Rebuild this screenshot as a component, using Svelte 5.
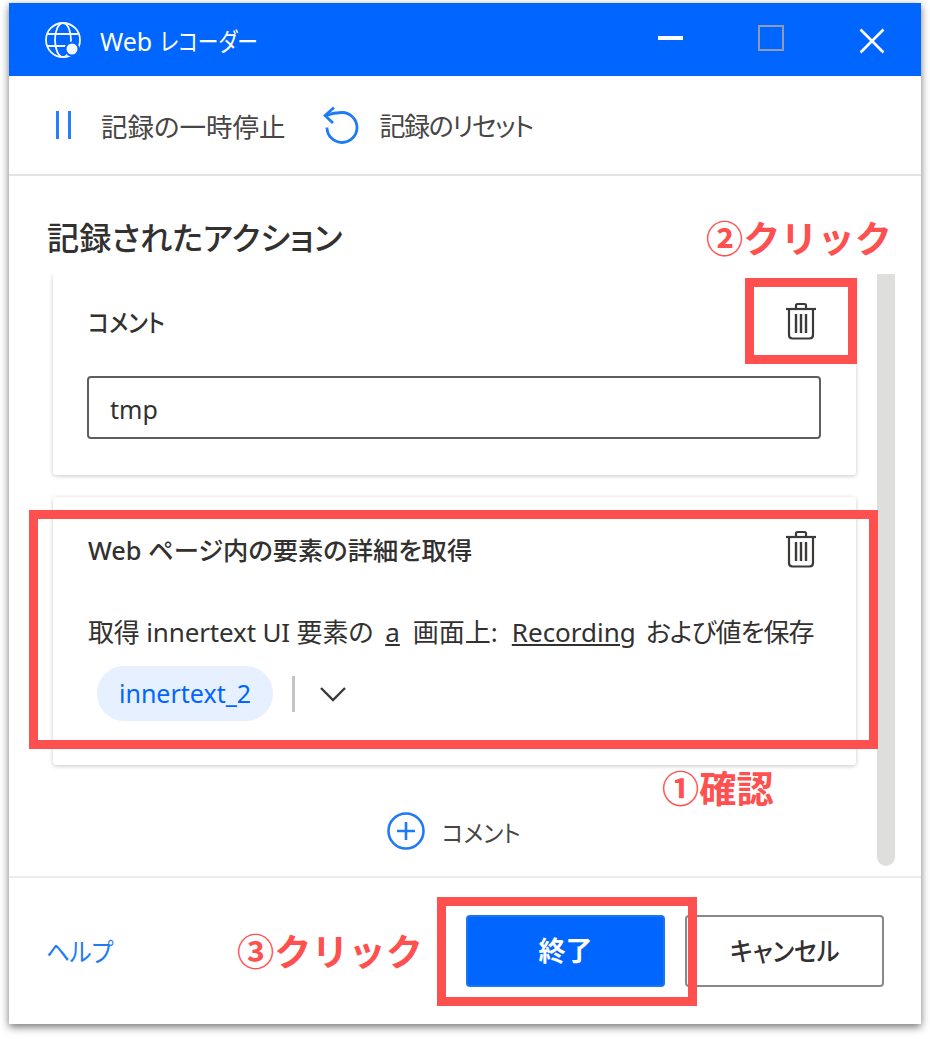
<script>
	const toolbarColor = '#1f7bf5';
	let tokens = ['取得 innertext UI 要素の', 'a', '画面上:', 'Recording', 'および値を保存'];
</script>

{#snippet trash()}
	<svg class="trash" viewBox="0 0 32 38" width="32" height="38" fill="none" stroke="#3b3a39" stroke-width="2.2">
		<path d="M1 7h30" />
		<path d="M11 7V3.500Q11 2 12.500 2h7Q21 2 21 3.500V7" />
		<path d="M4 7v26q0 3.500 3.500 3.500h17q3.500 0 3.500-3.500V7" />
		<path d="M11 12v19M16 12v19M21 12v19" stroke-width="2.400" />
	</svg>
{/snippet}

<div class="page">
	<div class="window">
		<header class="titlebar">
			<svg class="globe" viewBox="0 0 38 38" width="38" height="38" fill="none" stroke="#fff" stroke-width="1.800" opacity="0.95">
				<circle cx="19" cy="19" r="17" />
				<ellipse cx="19" cy="19" rx="8" ry="17" />
				<path d="M3.500 13h31M3.500 25h31" />
				<circle cx="28" cy="28" r="6.500" fill="#fff" stroke="#0066ff" stroke-width="2" />
			</svg>
			<span class="title">Web <span class="narrow n83">レコーダー</span></span>
			<div class="controls">
				<span class="min"></span>
				<span class="max"></span>
				<svg viewBox="0 0 26 26" width="26" height="26" stroke="#fff" stroke-width="2.600">
					<path d="M1.500 1.500l23 23M24.500 1.500l-23 23" />
				</svg>
			</div>
		</header>

		<div class="toolbar">
			<div class="tool pause">
				<span class="bars"><i></i><i></i></span>
				<span>記録の一時停止</span>
			</div>
			<div class="tool reset">
				<svg viewBox="0 0 36 38" width="36" height="38" fill="none" stroke={toolbarColor} stroke-width="2.800">
					<path d="M3 9.500C8 7.500 12 6.500 19 6.500A15 15 0 1 1 4 21.500" />
					<path d="M11 1.500L2 9.500l8 7.500" />
				</svg>
				<span class="resetlabel">記録のリセット</span>
			</div>
		</div>

		<h1>記録されたアクション</h1>

		<div class="scrollarea">
			<div class="list">
				<section class="card first">
					<div class="cardhead">
						<span class="cardtitle"><span class="narrow n88">コメント</span></span>
						{@render trash()}
					</div>
					<div class="input">tmp</div>
				</section>

				<section class="card second">
					<div class="cardhead">
						<span class="cardtitle strong">Web ページ内の要素の詳細を取得</span>
						{@render trash()}
					</div>
					<p class="sentence">
						<span class="lead">{tokens[0]}</span>
						<u>{tokens[1]}</u>
						<span class="screen">{tokens[2]}</span>
						<u>{tokens[3]}</u>
						<span class="tail">{tokens[4]}</span>
					</p>
					<div class="varrow">
						<span class="pill">innertext_2</span>
						<span class="sep"></span>
						<svg viewBox="0 0 28 16" width="28" height="16" fill="none" stroke="#3b3a39" stroke-width="2.400">
							<path d="M2 2l12 12L26 2" />
						</svg>
					</div>
				</section>

				<div class="addrow">
					<svg viewBox="0 0 38 38" width="38" height="38" fill="none" stroke={toolbarColor} stroke-width="2.600">
						<circle cx="19" cy="19" r="17.500" />
						<path d="M19 10v18M10 19h18" />
					</svg>
					<span class="narrow n94">コメント</span>
				</div>
			</div>
			<div class="scrollbar"></div>
		</div>

		<footer>
			<span class="help"><span class="narrow n90">ヘルプ</span></span>
			<div class="buttons">
				<span class="btn primary">終了</span>
				<span class="btn"><span class="narrow n93 mid">キャンセル</span></span>
			</div>
		</footer>
	</div>

	<!-- 注釈 -->
	<div class="redbox box-trash"></div>
	<div class="redbox box-card"></div>
	<div class="redbox box-finish"></div>
	<span class="note note-2">②クリック</span>
	<span class="note note-1">①確認</span>
	<span class="note note-3">③クリック</span>
</div>

<style>
	:global(body) {
		margin: 0;
		background: #fff;
		font-family: 'Noto Sans', 'Noto Sans CJK JP', sans-serif;
		color: #323130;
	}
	.page {
		position: relative;
		width: 930px;
		height: 1039px;
		overflow: hidden;
		padding: 3px 9px 15px;
		box-sizing: border-box;
	}
	.window {
		height: 100%;
		background: #fff;
		display: flex;
		flex-direction: column;
		box-shadow: 0 3px 8px rgba(0, 0, 0, 0.55);
		font-feature-settings: 'palt';
	}
	.narrow {
		display: inline-block;
		transform-origin: left center;
	}
	.mid {
		transform-origin: center;
	}
	.n83 {
		transform: scaleX(0.83);
	}
	.n88 {
		transform: scaleX(0.88);
	}
	.n90 {
		transform: scaleX(0.9);
	}
	.n93 {
		transform: scaleX(0.93);
	}
	.n94 {
		transform: scaleX(0.94);
	}
	.titlebar {
		height: 73px;
		flex: none;
		background: #0066ff;
		color: #fff;
		display: flex;
		align-items: center;
		padding: 0 36px;
		box-sizing: border-box;
	}
	.globe {
		margin-left: -1px;
	}
	.title {
		margin-left: 18px;
		font-size: 25px;
	}
	.title .narrow {
		margin-left: 1px;
	}
	.controls {
		margin-left: auto;
		display: flex;
		align-items: center;
		gap: 76px;
	}
	.min {
		width: 25px;
		height: 4px;
		background: #fff;
		margin-top: -4px;
		margin-right: 3px;
	}
	.max {
		width: 22px;
		height: 22px;
		border: 2px solid #8f9bb0;
		margin-top: -3px;
		margin-left: -4px;
		margin-right: -1px;
	}
	.controls svg {
		margin-top: 2px;
	}
	.toolbar {
		height: 100px;
		flex: none;
		box-sizing: border-box;
		border-bottom: 2px solid #e4e3e1;
		display: flex;
		align-items: center;
		padding: 0 0 0 47px;
		font-size: 26.500px;
		color: #484644;
	}
	.tool {
		display: flex;
		align-items: center;
	}
	.bars {
		display: flex;
		gap: 9px;
		margin-right: 30px;
	}
	.bars i {
		display: block;
		width: 3px;
		height: 28px;
		background: #2580f8;
	}
	.reset {
		margin-left: 37px;
	}
	.reset svg {
		margin-right: 21px;
	}
	.resetlabel {
		font-size: 26px;
		letter-spacing: -1.500px;
	}
	h1 {
		margin: 0 0 0 -1px;
		flex: none;
		height: 98px;
		box-sizing: border-box;
		padding: 37px 0 0 39px;
		font-size: 32.200px;
		line-height: 50px;
		font-weight: 500;
		color: #323130;
	}
	.scrollarea {
		flex: 1;
		min-height: 0;
		display: flex;
		padding-bottom: 10px;
		box-sizing: border-box;
		border-bottom: 2px solid #edebe9;
	}
	.list {
		width: 803px;
		margin-left: 44px;
		display: flex;
		flex-direction: column;
		gap: 22px;
	}
	.card {
		background: #fff;
		border-radius: 3px;
		box-shadow: 0 1px 4px rgba(0, 0, 0, 0.22);
		padding: 0 35px;
		box-sizing: border-box;
	}
	.first {
		height: 201px;
		padding-top: 27px;
		clip-path: inset(0 -8px -8px -8px);
	}
	.second {
		height: 268px;
		padding-top: 32px;
	}
	.cardhead {
		display: flex;
		justify-content: space-between;
		align-items: center;
		height: 40px;
	}
	.trash {
		margin-right: 4px;
	}
	.cardtitle {
		font-size: 25px;
		font-weight: 500;
	}
	.strong {
		font-size: 25.300px;
	}
	.input {
		margin: 35px 0 0 -1px;
		height: 63px;
		box-sizing: border-box;
		border: 2px solid #605e5c;
		border-radius: 4px;
		padding: 0 21px;
		font-size: 25px;
		line-height: 62px;
	}
	.sentence {
		margin: 45px 0 0;
		font-size: 26px;
		line-height: 36px;
		white-space: nowrap;
		display: flex;
		gap: 12px;
	}
	.lead {
		letter-spacing: -0.150px;
	}
	.screen {
		margin: 0 2px 0 1px;
	}
	.tail {
		letter-spacing: -1px;
		margin-left: -2px;
	}
	.varrow {
		display: flex;
		align-items: center;
		margin: 16px 0 0 9px;
	}
	.pill {
		background: #e6f0ff;
		color: #0066ff;
		height: 55px;
		line-height: 55px;
		padding: 0 22px;
		border-radius: 27px;
		font-size: 25px;
	}
	.sep {
		width: 3px;
		height: 36px;
		background: #c4c4c4;
		margin: 0 24px 0 19px;
	}
	.addrow {
		display: flex;
		align-items: center;
		justify-content: center;
		gap: 17px;
		margin: 25px 0 0 4px;
		font-size: 24px;
		color: #484644;
	}
	.scrollbar {
		width: 18px;
		margin-left: 21px;
		background: #dededc;
		border-radius: 0 0 9px 9px;
	}
	footer {
		height: 146px;
		flex: none;
		box-sizing: border-box;
		display: flex;
		align-items: flex-start;
		justify-content: space-between;
		padding: 37px 37px 0 37px;
	}
	.help {
		color: #1f7bf5;
		font-size: 26px;
		margin-top: 17px;
	}
	.buttons {
		display: flex;
		gap: 20px;
	}
	.btn {
		width: 199px;
		height: 72px;
		box-sizing: border-box;
		border: 2px solid #8a8886;
		border-radius: 4px;
		text-align: center;
		line-height: 68px;
		font-size: 26px;
		font-weight: 500;
	}
	.primary {
		background: #0066ff;
		border-color: #1a75f0;
		color: #fff;
		font-size: 27px;
		font-weight: 700;
	}
	.redbox {
		position: absolute;
		border: 9px solid #ff5050;
		box-sizing: border-box;
	}
	.box-trash {
		left: 745px;
		top: 278px;
		width: 112px;
		height: 86px;
	}
	.box-card {
		left: 29px;
		top: 510px;
		width: 849px;
		height: 239px;
	}
	.box-finish {
		left: 437px;
		top: 897px;
		width: 260px;
		height: 109px;
	}
	.note {
		position: absolute;
		color: #ff5050;
		font-weight: 700;
		font-family: 'Noto Sans CJK JP', sans-serif;
		font-size: 37.200px;
		line-height: 50px;
		white-space: nowrap;
	}
	.note-2 {
		left: 706px;
		top: 212px;
	}
	.note-1 {
		left: 662px;
		top: 762px;
	}
	.note-3 {
		left: 237px;
		top: 925px;
	}
</style>
